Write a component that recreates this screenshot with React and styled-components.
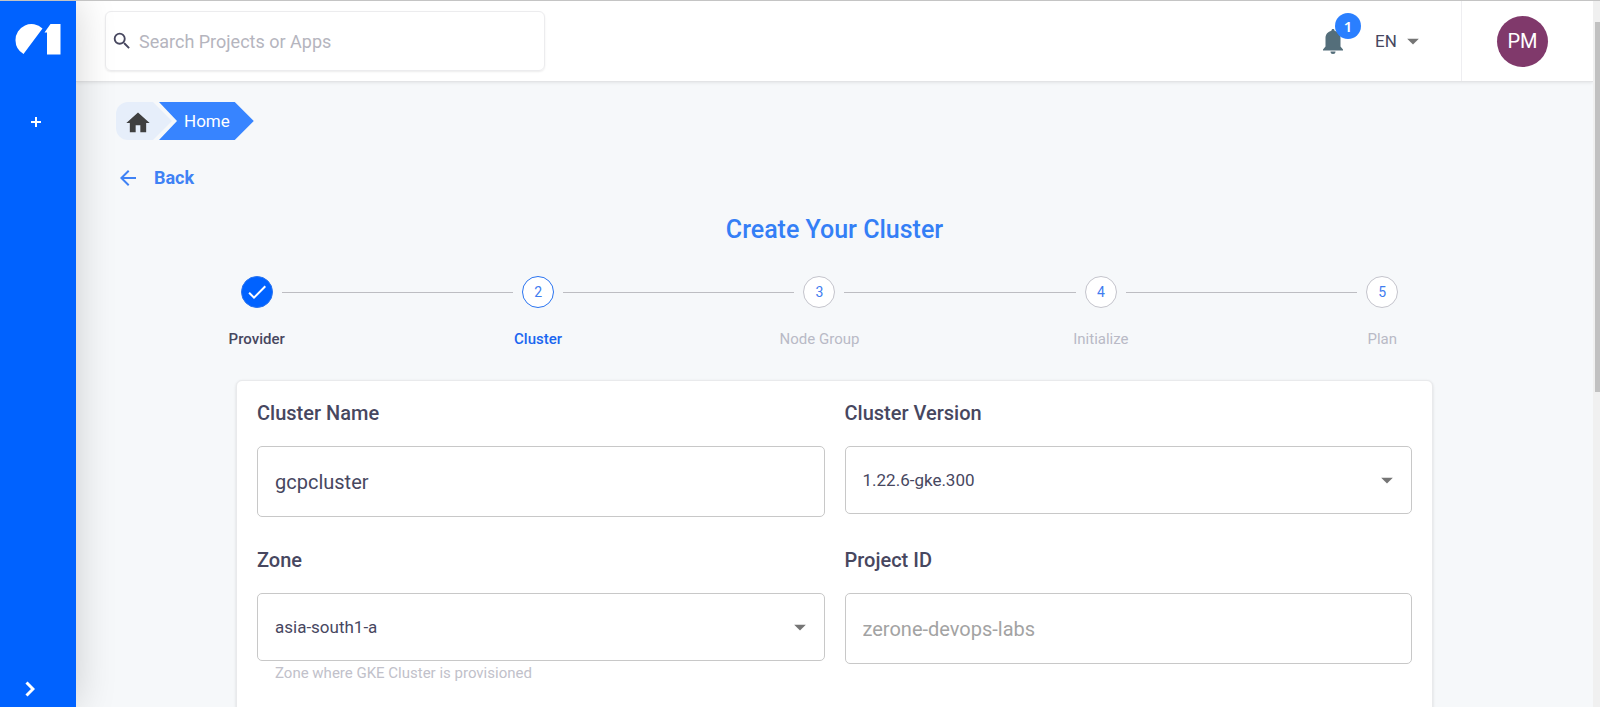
import React, { useState } from 'react';
import styled, { createGlobalStyle } from 'styled-components';
import { MdSearch, MdHome, MdArrowBack, MdArrowDropDown, MdCheck } from 'react-icons/md';

const GlobalStyle = createGlobalStyle`
    * {
        box-sizing: border-box;
    }
    body {
        margin: 0;
        font-family: Roboto, "Liberation Sans", sans-serif;
        color: #47475f;
        background-color: #f6f8fa;
    }
    button, input, select {
        font-family: inherit;
        color: inherit;
    }
`;

const Page = styled.div`
    display: flex;
    height: 100vh;
    overflow: hidden;
    border-top: 1px solid #c4c4c4;
`;

const Sidebar = styled.aside`
    display: flex;
    flex-direction: column;
    align-items: flex-start;
    flex: 0 0 76px;
    padding: 22px 0 8px 15px;
    background-color: #0062ff;
    box-shadow: 0 0 40px rgba(0, 0, 0, 0.18);
    z-index: 1;
`;

const SideButton = styled.button`
    display: flex;
    align-items: center;
    justify-content: center;
    width: ${({ $width }) => $width};
    height: 20px;
    padding: 0;
    border: none;
    background: none;
    cursor: pointer;
`;

const SideNav = styled.nav`
    flex: 1;
    padding-top: 57px;
`;

const Content = styled.div`
    display: flex;
    flex-direction: column;
    flex: 1;
    min-width: 0;
`;

const Header = styled.header`
    display: flex;
    align-items: center;
    flex: 0 0 81px;
    padding-left: 29px;
    background-color: #fff;
    border-bottom: 1px solid #e3e4e6;
    box-shadow: 0 1px 3px rgba(0, 0, 0, 0.08);
`;

const SearchBox = styled.label`
    display: flex;
    align-items: center;
    gap: 4px;
    width: 440px;
    height: 60px;
    padding-left: 5px;
    border: 1px solid #ececee;
    border-radius: 6px;
    box-shadow: 0 1px 2px rgba(0, 0, 0, 0.08);
    svg {
        font-size: 22px;
    }
`;

const SearchInput = styled.input`
    flex: 1;
    min-width: 0;
    border: none;
    outline: none;
    background: none;
    font-size: 18px;
    &::placeholder {
        color: #b5b5be;
        opacity: 1;
    }
`;

const HeaderActions = styled.div`
    display: flex;
    align-items: center;
    align-self: stretch;
    margin-left: auto;
`;

const BellButton = styled.button`
    position: relative;
    display: flex;
    margin-right: 32px;
    padding: 0;
    border: none;
    background: none;
    cursor: pointer;
`;

const Badge = styled.span`
    position: absolute;
    left: 12px;
    top: -16px;
    width: 26px;
    height: 26px;
    border-radius: 50%;
    background-color: #2a7fff;
    color: #fff;
    font-family: "Noto Sans", Roboto, sans-serif;
    font-size: 15px;
    font-weight: 600;
    line-height: 26px;
    text-align: center;
`;

const SelectWrap = styled.div`
    display: grid;
    align-items: center;
    & > * {
        grid-area: 1 / 1;
    }
    svg {
        justify-self: end;
        pointer-events: none;
        color: #757575;
        font-size: 28px;
    }
`;

const LanguageSelect = styled.select`
    appearance: none;
    width: 52px;
    padding: 0;
    border: none;
    outline: none;
    background: none;
    font-size: 17px;
`;

const AvatarArea = styled.div`
    display: flex;
    align-items: center;
    justify-content: center;
    align-self: stretch;
    width: 132px;
    margin-left: 34px;
    padding-right: 10px;
    border-left: 1px solid #eeeef1;
`;

const Avatar = styled.button`
    width: 51px;
    height: 51px;
    padding: 0;
    border: none;
    border-radius: 50%;
    background-color: #80396b;
    color: #fff;
    font-size: 20px;
    cursor: pointer;
`;

const Main = styled.main`
    flex: 1;
    min-height: 0;
    overflow: hidden;
    padding: 20px 40px 0;
`;

const Breadcrumbs = styled.nav`
    display: flex;
    height: 38px;
`;

const HomeCrumb = styled.a`
    display: flex;
    align-items: center;
    width: 56px;
    padding: 4px 0 0 8px;
    border-radius: 12px 0 0 12px;
    background-color: #e6eefa;
    clip-path: polygon(0 0, 37px 0, 100% 50%, 37px 100%, 0 100%);
    color: #404040;
    font-size: 28px;
`;

const Crumb = styled.a`
    display: flex;
    align-items: center;
    margin-left: -13px;
    padding: 0 24px 0 25px;
    background-color: #3784ff;
    clip-path: polygon(0 0, calc(100% - 19px) 0, 100% 50%, calc(100% - 19px) 100%, 0 100%, 18px 50%);
    color: #fff;
    font-size: 17px;
    text-decoration: none;
`;

const BackLink = styled.a`
    display: inline-flex;
    align-items: center;
    gap: 14px;
    margin-top: 26px;
    color: #3f82f5;
    font-size: 18px;
    font-weight: 700;
    line-height: 22px;
    text-decoration: none;
    svg {
        font-size: 24px;
    }
`;

const Title = styled.h1`
    margin: 20px 0 30px;
    color: #347ff6;
    font-size: 25px;
    font-weight: 500;
    line-height: 32px;
    text-align: center;
`;

const Stepper = styled.ol`
    display: grid;
    grid-template-columns: repeat(5, 1fr);
    margin: 0;
    padding: 0 30px 0 0;
    list-style: none;
`;

const StepItem = styled.li`
    display: grid;
    grid-template-columns: 1fr 32px 1fr;
    align-items: center;
    column-gap: 9px;
    row-gap: 21px;
`;

const StepLine = styled.span`
    height: 1px;
    background-color: ${({ $hidden }) => ($hidden ? 'transparent' : '#bdbdc2')};
`;

const StepCircle = styled.span`
    display: flex;
    align-items: center;
    justify-content: center;
    height: 32px;
    border: 1px solid ${({ $state }) => ($state === 'todo' ? '#c4c4cc' : '#2a74f0')};
    border-radius: 50%;
    background-color: ${({ $state }) => ($state === 'done' ? '#0062ff' : '#fff')};
    color: ${({ $state }) => ($state === 'done' ? '#fff' : '#3f7df0')};
    font-size: 14px;
    svg {
        flex-shrink: 0;
        font-size: 24px;
    }
`;

const labelColors = { done: '#47475f', active: '#1a66f0', todo: '#b9bac6' };

const StepLabel = styled.span`
    grid-column: 1 / -1;
    color: ${({ $state }) => labelColors[$state]};
    font-size: 15px;
    font-weight: ${({ $state }) => ($state === 'todo' ? 400 : 500)};
    line-height: 20px;
    text-align: center;
`;

const Card = styled.form`
    display: grid;
    grid-template-columns: 1fr 1fr;
    gap: 30px 20px;
    max-width: 1197px;
    min-height: 480px;
    margin: 31px auto 0;
    padding: 19px 20px;
    align-content: start;
    border: 1px solid #e9eaec;
    border-radius: 6px;
    background-color: #fff;
    box-shadow: 0 1px 3px rgba(0, 0, 0, 0.12);
`;

const Field = styled.div`
    display: flex;
    flex-direction: column;
    height: 117px;
`;

const FieldLabel = styled.label`
    margin-bottom: 20px;
    font-size: 20px;
    font-weight: 500;
    line-height: 26px;
`;

const TextInput = styled.input`
    width: 100%;
    height: 71px;
    padding: 0 17px;
    border: 1px solid #c8c8c8;
    border-radius: 5px;
    outline: none;
    background-color: #fff;
    font-size: 20px;
    &:disabled {
        color: #a3a3a3;
    }
`;

const FieldSelect = styled.select`
    appearance: none;
    width: 100%;
    height: 68px;
    padding: 0 17px;
    border: 1px solid #c8c8c8;
    border-radius: 5px;
    outline: none;
    background-color: #fff;
    font-size: 17px;
`;

const FieldSelectWrap = styled(SelectWrap)`
    svg {
        margin-right: 11px;
    }
`;

const HelperText = styled.small`
    margin: 3px 18px 0;
    color: #c1c1ca;
    font-size: 15px;
    line-height: 18px;
`;

const ScrollTrack = styled.div`
    flex: 0 0 7px;
    padding: 21px 0 0 2px;
    background-color: #f0f0f0;
`;

const ScrollThumb = styled.div`
    height: 54%;
    background-color: #c1c1c1;
`;

const steps = [
    { label: 'Provider', state: 'done' },
    { label: 'Cluster', state: 'active' },
    { label: 'Node Group', state: 'todo' },
    { label: 'Initialize', state: 'todo' },
    { label: 'Plan', state: 'todo' },
];

const Logo = () => (
    <svg width="46" height="32" viewBox="0 0 46 32" fill="#fff" role="img" aria-label="01">
        <path d="M8.500 31 A16 16 0 0 1 0.500 17.500 A16 16 0 0 1 27.500 5.500 Z" />
        <path d="M29.500 9.500 L35.500 1 H45.500 V31.500 H32 V9.500 Z" />
    </svg>
);

const Bell = () => (
    <svg width="20" height="25" viewBox="0 0 20 25" fill="#546e7a" aria-hidden="true">
        <path d="M10 0c-1 0-1.500.7-1.600 1.700C5 2.500 2.500 5.300 2.500 9v8.500L0 20.500V21.500h20v-1L17.500 17.500V9c0-3.700-2.500-6.500-5.900-7.300C11.500.7 11 0 10 0zM7.500 22.500a2.500 2.500 0 0 0 5 0z" />
    </svg>
);

const Stepbar = () => (
    <Stepper>
        {steps.map(({ label, state }, i) => (
            <StepItem key={label}>
                <StepLine $hidden={i === 0} />
                <StepCircle $state={state}>{state === 'done' ? <MdCheck /> : i + 1}</StepCircle>
                <StepLine $hidden={i === steps.length - 1} />
                <StepLabel $state={state}>{label}</StepLabel>
            </StepItem>
        ))}
    </Stepper>
);

const ClusterForm = () => {
    const [name, setName] = useState('gcpcluster');

    return (
        <Card>
            <Field>
                <FieldLabel htmlFor="name">Cluster Name</FieldLabel>
                <TextInput id="name" value={name} onChange={(e) => setName(e.target.value)} />
            </Field>
            <Field>
                <FieldLabel htmlFor="version">Cluster Version</FieldLabel>
                <FieldSelectWrap>
                    <FieldSelect id="version">
                        <option>1.22.6-gke.300</option>
                    </FieldSelect>
                    <MdArrowDropDown />
                </FieldSelectWrap>
            </Field>
            <Field>
                <FieldLabel htmlFor="zone">Zone</FieldLabel>
                <FieldSelectWrap>
                    <FieldSelect id="zone" aria-describedby="zone-help">
                        <option>asia-south1-a</option>
                    </FieldSelect>
                    <MdArrowDropDown />
                </FieldSelectWrap>
                <HelperText id="zone-help">Zone where GKE Cluster is provisioned</HelperText>
            </Field>
            <Field>
                <FieldLabel htmlFor="project">Project ID</FieldLabel>
                <TextInput id="project" value="zerone-devops-labs" disabled />
            </Field>
        </Card>
    );
};

export default function App() {
    return (
        <>
            <GlobalStyle />
            <Page>
                <Sidebar>
                    <Logo />
                    <SideNav>
                        <SideButton $width="41px" aria-label="Add project">
                            <svg width="10" height="10" viewBox="0 0 10 10" stroke="#fff" strokeWidth="2">
                                <path d="M5 0V10M0 5H10" />
                            </svg>
                        </SideButton>
                    </SideNav>
                    <SideButton $width="30px" aria-label="Expand menu">
                        <svg width="10" height="16" viewBox="0 0 10 16" fill="none" stroke="#fff" strokeWidth="3">
                            <path d="M1.500 1.500L8 8L1.500 14.500" />
                        </svg>
                    </SideButton>
                </Sidebar>
                <Content>
                    <Header>
                        <SearchBox>
                            <MdSearch />
                            <SearchInput placeholder="Search Projects or Apps" aria-label="Search" />
                        </SearchBox>
                        <HeaderActions>
                            <BellButton aria-label="Notifications">
                                <Bell />
                                <Badge>1</Badge>
                            </BellButton>
                            <SelectWrap>
                                <LanguageSelect aria-label="Language">
                                    <option>EN</option>
                                </LanguageSelect>
                                <MdArrowDropDown />
                            </SelectWrap>
                            <AvatarArea>
                                <Avatar>PM</Avatar>
                            </AvatarArea>
                        </HeaderActions>
                    </Header>
                    <Main>
                        <Breadcrumbs aria-label="Breadcrumb">
                            <HomeCrumb href="#" aria-label="Dashboard">
                                <MdHome />
                            </HomeCrumb>
                            <Crumb href="#">Home</Crumb>
                        </Breadcrumbs>
                        <BackLink href="#">
                            <MdArrowBack />
                            Back
                        </BackLink>
                        <Title>Create Your Cluster</Title>
                        <Stepbar />
                        <ClusterForm />
                    </Main>
                </Content>
                <ScrollTrack>
                    <ScrollThumb />
                </ScrollTrack>
            </Page>
        </>
    );
}
